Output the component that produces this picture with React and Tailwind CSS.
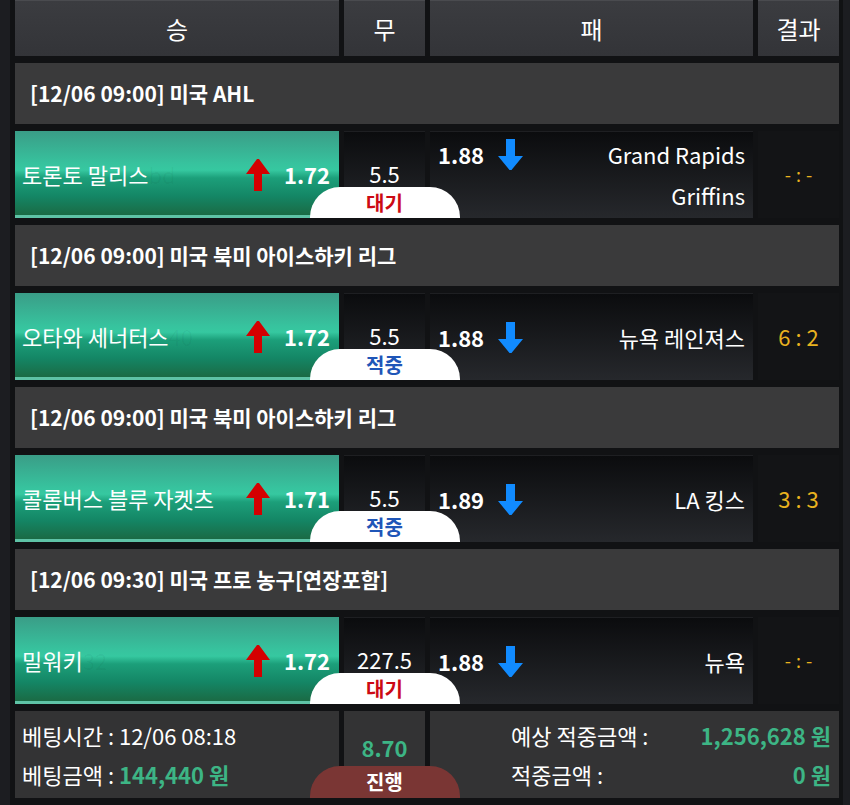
const games = [
  {
    league: '[12/06 09:00] 미국 AHL',
    home: '토론토 말리스',
    ghost: 'bd',
    homeOdds: '1.72',
    draw: '5.5',
    awayOdds: '1.88',
    away: ['Grand Rapids', 'Griffins'],
    result: '-:-',
    status: 'wait'
  },
  {
    league: '[12/06 09:00] 미국 북미 아이스하키 리그',
    home: '오타와 세너터스',
    ghost: '40',
    homeOdds: '1.72',
    draw: '5.5',
    awayOdds: '1.88',
    away: ['뉴욕 레인져스'],
    result: '6 : 2',
    status: 'hit'
  },
  {
    league: '[12/06 09:00] 미국 북미 아이스하키 리그',
    home: '콜롬버스 블루 자켓츠',
    ghost: '',
    homeOdds: '1.71',
    draw: '5.5',
    awayOdds: '1.89',
    away: ['LA 킹스'],
    result: '3 : 3',
    status: 'hit'
  },
  {
    league: '[12/06 09:30] 미국 프로 농구[연장포함]',
    home: '밀워키',
    ghost: '32',
    homeOdds: '1.72',
    draw: '227.5',
    awayOdds: '1.88',
    away: ['뉴욕'],
    result: '-:-',
    status: 'wait'
  }
]

function UpArrow() {
  return (
    <svg width="24" height="32" viewBox="0 0 24 32" className="shrink-0">
      <polygon points="11,0 13,0 24,15 16,15 16,32 8,32 8,15 0,15" fill="#d40000" />
    </svg>
  )
}

function DownArrow() {
  return (
    <svg width="25" height="31" viewBox="0 0 25 31" className="shrink-0">
      <polygon points="8,0 17,0 17,17 25,17 13.5,31 11.5,31 0,17 8,17" fill="#118bff" />
    </svg>
  )
}

function Badge({ status }) {
  if (status === 'hit') {
    return (
      <div className="absolute bottom-0 left-1/2 -translate-x-1/2 z-10 w-[150px] h-[31px] bg-white rounded-t-[30px] flex items-center justify-center text-[20px] font-bold text-[#1f56b8] leading-none">
        적중
      </div>
    )
  }
  return (
    <div className="absolute bottom-0 left-1/2 -translate-x-1/2 z-10 w-[150px] h-[31px] bg-white rounded-t-[30px] flex items-center justify-center text-[20px] font-bold text-[#cc0a14] leading-none">
      대기
    </div>
  )
}

function GameRow({ game }) {
  const single = game.away.length === 1
  return (
    <>
      <div className="col-span-4 h-[61px] bg-[#3a3a3b] flex items-center px-[15px] text-[21px] font-bold text-white">
        {game.league}
      </div>
      <div className="h-[87px] flex items-center pl-[7px] pr-[9px] text-white bg-[linear-gradient(180deg,#3a9d87_0%,#37c39e_38%,#36c8a0_45%,#1c9f7a_54%,#148665_75%,#1a6b45_96%,#5ec3a6_97%,#5ec3a6_100%)]">
        <span className="text-[22px]">{game.home}</span>
        <span className="text-[22px] text-black/[0.04]">{game.ghost}</span>
        <div className="ml-auto flex items-center gap-[14px]">
          <UpArrow />
          <span className="text-[22px] font-bold">{game.homeOdds}</span>
        </div>
      </div>
      <div className="relative h-[87px] flex justify-center pt-[30px] text-[22px] leading-none text-white bg-[linear-gradient(180deg,#0b0c0e,#26282c)] border-t border-[#1e1f22]">
        <span>{game.draw}</span>
        <Badge status={game.status} />
      </div>
      <div className={`h-[87px] flex ${single ? 'items-center' : 'items-start pt-[2px]'} pl-[8px] pr-[8px] text-white bg-[linear-gradient(180deg,#0b0c0e,#26282c)] border-t border-[#1e1f22]`}>
        <div className="flex items-center gap-[14px] h-[41px]">
          <span className="text-[22px] font-bold">{game.awayOdds}</span>
          <DownArrow />
        </div>
        <div className="ml-auto text-right text-[22px] leading-[41px]">
          {game.away.map((line) => (
            <div key={line}>{line}</div>
          ))}
        </div>
      </div>
      <div className={`h-[87px] bg-[#131416] flex items-center justify-center text-[#e9b21f] ${game.result === '-:-' ? 'text-[18px] tracking-[5px] pl-[5px]' : 'text-[22px]'}`}>
        {game.result}
      </div>
    </>
  )
}

export default function App() {
  return (
    <div className="w-[850px] h-[805px] overflow-hidden bg-[#1c1d21] font-['Noto_Sans_CJK_KR','Noto_Sans',sans-serif]">
      <div className="ml-[10px] w-[833px] h-full bg-[#111214] px-[5px]">
        <div className="grid grid-cols-[324px_81px_323px_81px] gap-x-[5px] gap-y-[7px]">
          {['승', '무', '패', '결과'].map((h) => (
            <div
              key={h}
              className="h-[56px] flex items-center justify-center text-[24px] text-white bg-[linear-gradient(180deg,#3b3c40,#333438)] border-t border-[#4a4b4f]"
            >
              {h}
            </div>
          ))}

          {games.map((g, i) => (
            <GameRow key={i} game={g} />
          ))}

          <div className="h-[87px] bg-[#333334] flex flex-col justify-center gap-[8px] pl-[7px] text-[22px] text-white leading-[31px]">
            <div>베팅시간 : 12/06 08:18</div>
            <div>
              베팅금액 : <span className="font-bold text-[#3db585]">144,440 원</span>
            </div>
          </div>
          <div className="relative h-[87px] bg-[#333334] flex justify-center pt-[25px] text-[22px] leading-none font-bold text-[#3db585]">
            <span>8.70</span>
            <div className="absolute bottom-0 left-1/2 -translate-x-1/2 z-10 w-[150px] h-[32px] bg-[#7a3634] rounded-t-[30px] flex items-center justify-center text-[20px] font-bold text-white leading-none">
              진행
            </div>
          </div>
          <div className="col-span-2 h-[87px] bg-[#333334] grid grid-cols-[auto_1fr] content-center gap-y-[8px] pl-[81px] pr-[8px] text-[22px] text-white leading-[31px]">
            <div>예상 적중금액 :</div>
            <div className="text-right font-bold text-[#3db585]">1,256,628 원</div>
            <div>적중금액 :</div>
            <div className="text-right font-bold text-[#3db585]">0 원</div>
          </div>
        </div>
      </div>
    </div>
  )
}
